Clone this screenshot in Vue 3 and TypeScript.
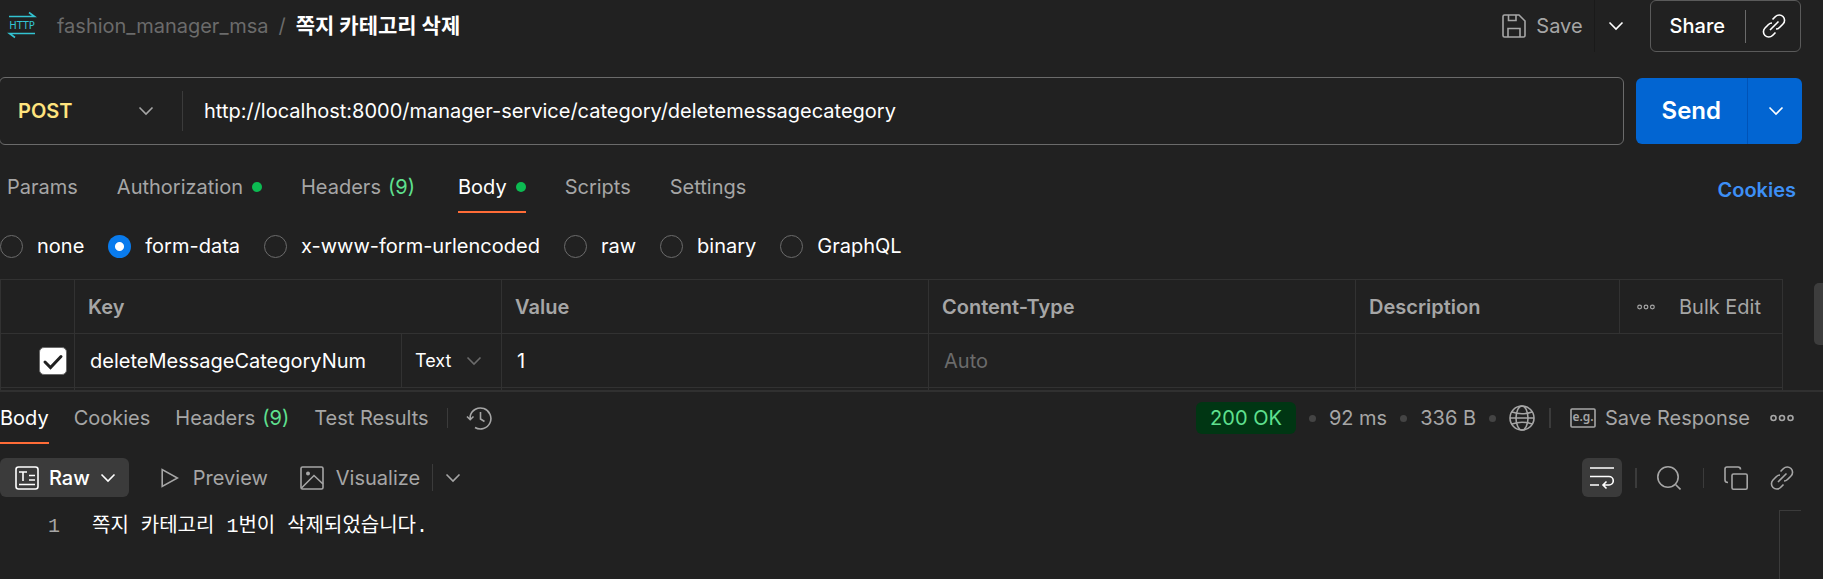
<script setup lang="ts">
import { ref } from 'vue'

interface Tab {
  label: string
  count?: number
  dot?: boolean
}

const requestTabs: Tab[] = [
  { label: 'Params' },
  { label: 'Authorization', dot: true },
  { label: 'Headers', count: 9 },
  { label: 'Body', dot: true },
  { label: 'Scripts' },
  { label: 'Settings' },
]
const responseTabs: Tab[] = [
  { label: 'Body' },
  { label: 'Cookies' },
  { label: 'Headers', count: 9 },
  { label: 'Test Results' },
]
const bodyTypes: string[] = ['none', 'form-data', 'x-www-form-urlencoded', 'raw', 'binary', 'GraphQL']

const activeRequestTab = ref('Body')
const activeResponseTab = ref('Body')
const bodyType = ref('form-data')
const method = ref('POST')
const url = ref('http://localhost:8000/manager-service/category/deletemessagecategory')
const enabled = ref(true)
const fieldKey = ref('deleteMessageCategoryNum')
const fieldType = ref('Text')
const fieldValue = ref('1')
const contentType = ref('')
const description = ref('')
const lines: string[] = ['쪽지 카테고리 1번이 삭제되었습니다.']
</script>

<template>
  <div class="app">
    <svg class="sprite" aria-hidden="true">
      <symbol id="chevron" viewBox="0 0 16 16">
        <path d="M1.5 4.5 8 11l6.500-6.500" />
      </symbol>
      <symbol id="link" viewBox="0 0 24 24">
        <path d="M8 16 16.500 7.500M10.500 5.500l3-3a5.200 5.200 0 0 1 7.500 7.500l-3.500 3.500a5 5 0 0 1-3.500 1.500M13.500 18.500l-3 3A5.200 5.200 0 0 1 3 14l3.500-3.500A5 5 0 0 1 10 9" />
      </symbol>
      <symbol id="more" viewBox="0 0 24 24">
        <circle cx="3.500" cy="12" r="2.500" />
        <circle cx="12" cy="12" r="2.500" />
        <circle cx="20.500" cy="12" r="2.500" />
      </symbol>
    </svg>

    <header class="header">
      <svg class="http" viewBox="0 0 26 26" role="img" aria-label="HTTP request">
        <path d="M0 4.500h25.500L20 0.500" />
        <text x="13" y="17" text-anchor="middle">HTTP</text>
        <path d="M26 21.500H0.500L6 25.500" />
      </svg>
      <nav class="crumbs" aria-label="Breadcrumb">
        <a href="#">fashion_manager_msa</a>
        <span class="slash">/</span>
        <strong>쪽지 카테고리 삭제</strong>
      </nav>
      <button type="button" class="save">
        <svg class="icon" viewBox="0 0 24 24">
          <path d="M1 2.500A1.500 1.500 0 0 1 2.500 1H17l6 6v14.500a1.500 1.500 0 0 1-1.500 1.500h-19A1.500 1.500 0 0 1 1 21.500zM6.500 1v5.500h7.500V1M6 23v-8.500h12V23" />
        </svg>
        Save
      </button>
      <button type="button" class="save-more" aria-label="Save options">
        <svg class="chev"><use href="#chevron" /></svg>
      </button>
      <div class="share">
        <button type="button" class="share-main">Share</button>
        <button type="button" class="share-link" aria-label="Copy link">
          <svg class="icon"><use href="#link" /></svg>
        </button>
      </div>
    </header>

    <form class="request" @submit.prevent>
      <div class="url-box">
        <label class="method">
          <select v-model="method" aria-label="Method">
            <option>POST</option>
            <option>GET</option>
          </select>
          <svg class="chev"><use href="#chevron" /></svg>
        </label>
        <input v-model="url" class="url" type="text" aria-label="Request URL" />
      </div>
      <div class="send">
        <button type="submit" class="send-main">Send</button>
        <button type="button" class="send-more" aria-label="Send options">
          <svg class="chev"><use href="#chevron" /></svg>
        </button>
      </div>
    </form>

    <div class="tabs-row">
      <div class="tabs req-tabs" role="tablist" aria-label="Request">
        <button
          v-for="tab in requestTabs"
          :key="tab.label"
          type="button"
          role="tab"
          class="tab"
          :class="{ active: tab.label === activeRequestTab }"
          :aria-selected="tab.label === activeRequestTab"
          @click="activeRequestTab = tab.label"
        >
          {{ tab.label }}
          <span v-if="tab.count" class="count">({{ tab.count }})</span>
          <span v-if="tab.dot" class="dot"></span>
        </button>
      </div>
      <a href="#" class="cookies">Cookies</a>
    </div>

    <div class="radios" role="radiogroup" aria-label="Body type">
      <label v-for="type in bodyTypes" :key="type" class="radio">
        <input v-model="bodyType" type="radio" name="body-type" :value="type" />
        {{ type }}
      </label>
    </div>

    <div class="pane">
      <table>
        <colgroup>
          <col class="col-check" />
          <col />
          <col />
          <col />
          <col />
        </colgroup>
        <thead>
          <tr>
            <th aria-label="Enabled"></th>
            <th>Key</th>
            <th>Value</th>
            <th>Content-Type</th>
            <th>
              <div class="cell">
                <span class="desc">Description</span>
                <div class="actions">
                  <button type="button" aria-label="Columns">
                    <svg class="more-small"><use href="#more" /></svg>
                  </button>
                  <button type="button">Bulk Edit</button>
                </div>
              </div>
            </th>
          </tr>
        </thead>
        <tbody>
          <tr>
            <td>
              <label class="check">
                <input v-model="enabled" type="checkbox" aria-label="Enable field" />
                <svg v-if="enabled" viewBox="0 0 28 28"><path d="M6 15l5.500 5.500L22 9.500" /></svg>
              </label>
            </td>
            <td>
              <div class="cell">
                <input v-model="fieldKey" class="field" type="text" aria-label="Key" />
                <label class="type">
                  <select v-model="fieldType" aria-label="Field type">
                    <option>Text</option>
                    <option>File</option>
                  </select>
                  <svg class="chev"><use href="#chevron" /></svg>
                </label>
              </div>
            </td>
            <td><input v-model="fieldValue" class="field" type="text" aria-label="Value" /></td>
            <td><input v-model="contentType" class="field" type="text" placeholder="Auto" aria-label="Content-Type" /></td>
            <td><input v-model="description" class="field" type="text" aria-label="Description" /></td>
          </tr>
          <tr>
            <td></td>
            <td></td>
            <td></td>
            <td></td>
            <td></td>
          </tr>
        </tbody>
      </table>
      <div class="thumb"></div>
    </div>

    <section class="response">
      <div class="res-head">
        <div class="tabs res-tabs" role="tablist" aria-label="Response">
          <button
            v-for="tab in responseTabs"
            :key="tab.label"
            type="button"
            role="tab"
            class="tab"
            :class="{ active: tab.label === activeResponseTab }"
            :aria-selected="tab.label === activeResponseTab"
            @click="activeResponseTab = tab.label"
          >
            {{ tab.label }}
            <span v-if="tab.count" class="count">({{ tab.count }})</span>
          </button>
        </div>
        <span class="bar bar-tabs"></span>
        <button type="button" aria-label="History">
          <svg class="icon-lg" viewBox="0 0 26 26">
            <path d="M4.200 14.500V11A10.500 10.500 0 1 1 9 22.500M1 11.500l3.200 3.200 3.300-3.200M14.500 7v7l4 2.500" />
          </svg>
        </button>
        <div class="status">
          <span class="ok">200 OK</span>
          <span class="sep"></span>
          <span>92 ms</span>
          <span class="sep"></span>
          <span>336 B</span>
          <span class="sep"></span>
          <button type="button" aria-label="Network">
            <svg class="icon-lg" viewBox="0 0 26 26">
              <circle cx="13" cy="13" r="12" />
              <ellipse cx="13" cy="13" rx="6" ry="12" />
              <path d="M3 7q10 3.500 20 0M3 19q10-3.500 20 0M1 13h24" />
            </svg>
          </button>
        </div>
        <span class="bar wide"></span>
        <button type="button" class="save-response">
          <svg class="icon-lg" viewBox="0 0 26 26">
            <rect x="1" y="4" width="24" height="18" rx="1" />
            <text x="13" y="16" text-anchor="middle">e.g.</text>
          </svg>
          Save Response
        </button>
        <button type="button" aria-label="More">
          <svg class="icon"><use href="#more" /></svg>
        </button>
      </div>

      <div class="toolbar">
        <button type="button" class="raw">
          <svg class="icon" viewBox="0 0 24 24">
            <rect x="1" y="1" width="22" height="22" rx="2.500" />
            <path d="M4 6h8M8 6v9M14 9.500h6M14 14h6M4 18.500h16" />
          </svg>
          Raw
          <svg class="chev"><use href="#chevron" /></svg>
        </button>
        <button type="button" class="preview">
          <svg class="play" viewBox="0 0 18 20"><path d="M1.200 1.500v17L16.500 10z" /></svg>
          Preview
        </button>
        <button type="button" class="visualize">
          <svg class="icon" viewBox="0 0 24 24">
            <rect x="1" y="1" width="22" height="22" rx="1.500" />
            <circle class="solid" cx="8" cy="7.500" r="2" />
            <path d="M1.500 22 14 9.500l9 8.500" />
          </svg>
          Visualize
        </button>
        <span class="bar tall"></span>
        <button type="button" class="view-more" aria-label="Visualize options">
          <svg class="chev"><use href="#chevron" /></svg>
        </button>
        <div class="tools">
          <button type="button" class="wrap" aria-label="Wrap lines">
            <svg class="icon" viewBox="0 0 24 24">
              <path d="M0 2h24M0 10.500h19a4.200 4.200 0 0 1 0 8.500h-6M16.500 15.500 13 19l3.500 3.500M0 19h9" />
            </svg>
          </button>
          <span class="bar wide"></span>
          <button type="button" class="search" aria-label="Search">
            <svg class="icon" viewBox="0 0 24 24">
              <circle cx="11" cy="11" r="10.200" />
              <path d="m18.500 18.500 5 5" />
            </svg>
          </button>
          <span class="bar"></span>
          <button type="button" class="copy" aria-label="Copy">
            <svg class="icon" viewBox="0 0 24 24">
              <path d="M4 16.500c-2 0-3-1-3-2.500V3a2 2 0 0 1 2-2h11c1.500 0 2.500 1 2.500 2.500" />
              <rect x="8" y="8" width="15.200" height="15.200" rx="1.500" />
            </svg>
          </button>
          <button type="button" aria-label="Copy response link">
            <svg class="icon"><use href="#link" /></svg>
          </button>
        </div>
      </div>

      <div class="editor">
        <ol class="code">
          <li v-for="(line, i) in lines" :key="i">
            <span class="num">{{ i + 1 }}</span><code>{{ line }}</code>
          </li>
        </ol>
        <div class="ruler"></div>
      </div>
    </section>
  </div>
</template>

<style>
html,
body {
  background: #212121;
}
</style>

<style scoped>
.app {
  display: flex;
  flex-direction: column;
  min-height: 100vh;
  overflow: hidden;
  background: #212121;
  color: #a6a6a6;
  font: 400 20px/28px Inter, "Noto Sans CJK KR", sans-serif;
}
.app *,
.app *::before,
.app *::after {
  box-sizing: border-box;
}
.sprite {
  position: absolute;
  width: 0;
  height: 0;
}
button,
input,
select {
  appearance: none;
  margin: 0;
  padding: 0;
  border: 0;
  border-radius: 0;
  outline: 0;
  background: none;
  color: inherit;
  font: inherit;
}
button {
  display: flex;
  align-items: center;
  flex: none;
  white-space: nowrap;
}
a {
  color: inherit;
  text-decoration: none;
}
svg {
  display: block;
  flex: none;
  fill: none;
  stroke: currentColor;
  stroke-width: 1.6;
}
.solid {
  fill: currentColor;
  stroke: none;
}
.chev {
  width: 16px;
  height: 16px;
}
.icon {
  width: 24px;
  height: 24px;
}
.icon-lg {
  width: 26px;
  height: 26px;
}
.bar {
  flex: none;
  width: 1px;
  height: 20px;
  background: #3b3b3b;
}
.bar.wide {
  width: 2px;
}

.header {
  display: flex;
  align-items: stretch;
  height: 52px;
  padding-right: 22px;
}
.http {
  width: 26px;
  height: 26px;
  margin: 12px 22px 0 9px;
  overflow: visible;
  color: #33c3d1;
}
.http text {
  fill: currentColor;
  stroke: none;
  font: 400 11px "DejaVu Sans Condensed", "Noto Sans", sans-serif;
}
.crumbs {
  display: flex;
  align-items: center;
  flex: 1;
  gap: 10px;
  color: #6b6b6b;
}
.crumbs strong {
  color: #fff;
  font-size: 21px;
  font-weight: 700;
}
.save {
  gap: 10px;
  padding-right: 11px;
}
.save-more {
  padding: 0 26px 0 13px;
  border-left: 1px solid #1a1a1a;
  color: #fff;
}
.share {
  display: flex;
  align-items: center;
  border: 1px solid #5a5a5a;
  border-radius: 6px;
  color: #fff;
}
.share-main {
  height: 33px;
  padding: 0 20px 0 19px;
  border-right: 1px solid #6b6b6b;
  font-weight: 500;
}
.share-link {
  padding: 0 14px 0 16px;
}

.request {
  display: flex;
  align-items: center;
  gap: 12px;
  margin: 25px 21px 0 -1px;
}
.url-box {
  display: flex;
  align-items: center;
  flex: 1;
  height: 68px;
  border: 1px solid #6b6b6b;
  border-radius: 6px;
}
.method {
  display: flex;
  align-items: center;
  justify-content: space-between;
  width: 183px;
  height: 40px;
  padding: 0 28px 0 18px;
  border-right: 1px solid #3b3b3b;
}
.method select {
  color: #ffe47e;
  font-weight: 600;
}
.url {
  flex: 1;
  min-width: 0;
  padding: 0 21px;
  color: #fff;
}
.send {
  display: flex;
  height: 66px;
  border-radius: 6px;
  overflow: hidden;
  background: #0265d2;
  color: #fff;
}
.send-main {
  padding: 0 26px;
  border-right: 1px solid #0053b8;
  font-size: 24px;
  font-weight: 600;
}
.send-more {
  padding: 0 18px 0 20px;
}

.tabs-row {
  display: flex;
  align-items: center;
  justify-content: space-between;
  height: 52px;
  margin-top: 16px;
  padding: 0 27px 0 7px;
}
.tabs {
  display: flex;
}
.tab {
  height: 52px;
  gap: 7px;
  border: solid transparent;
  border-width: 2px 0;
}
.tab.active {
  border-bottom-color: #ff6c37;
  color: #fff;
}
.count {
  color: #5fe08f;
}
.req-tabs {
  gap: 39px;
}
.req-tabs .count {
  margin-right: 4px;
}
.dot {
  width: 10px;
  height: 10px;
  margin-left: 2px;
  border-radius: 50%;
  background: #0cbb52;
}
.cookies {
  padding-top: 6px;
  color: #3d8ff5;
  font-weight: 600;
}

.radios {
  display: flex;
  align-items: center;
  gap: 24px;
  height: 66px;
  color: #fff;
}
.radio {
  display: flex;
  align-items: center;
  gap: 14px;
}
.radio input {
  width: 23px;
  height: 23px;
  border: 1px solid #6b6b6b;
  border-radius: 50%;
}
.radio input:checked {
  border: 0;
  background: radial-gradient(circle, #fff 4px, #097bed 5px);
}

.pane {
  display: flex;
  align-items: flex-start;
  justify-content: space-between;
  gap: 31px;
  max-height: 111px;
  overflow: hidden;
}
table {
  flex: 1;
  width: 100%;
  table-layout: fixed;
  border-collapse: collapse;
}
.col-check {
  width: 74px;
}
th,
td {
  height: 54px;
  padding: 0 0 0 13px;
  border: 1px solid #323232;
  text-align: left;
}
th {
  font-weight: 600;
}
td {
  padding-left: 15px;
  color: #fff;
}
.cell {
  display: flex;
  align-items: center;
  height: 53px;
}
.desc {
  flex: 1;
}
.actions {
  display: flex;
  align-items: center;
  gap: 24px;
  height: 100%;
  padding: 0 21px 0 17px;
  border-left: 1px solid #323232;
}
.actions button {
  font-weight: 400;
}
.more-small {
  width: 18px;
  height: 18px;
}
.check {
  display: grid;
  width: 28px;
  height: 28px;
  margin-left: 23px;
}
.check input,
.check svg {
  grid-area: 1 / 1;
  width: 28px;
  height: 28px;
  border-radius: 5px;
}
.check input {
  border: 1px solid #6b6b6b;
}
.check input:checked {
  background: #fff;
}
.check svg {
  color: #212121;
  stroke-width: 3;
  stroke-linecap: round;
}
.field {
  flex: 1;
  width: 100%;
  min-width: 0;
}
.field::placeholder {
  color: #6b6b6b;
  opacity: 1;
}
.type {
  display: flex;
  align-items: center;
  justify-content: space-between;
  width: 100px;
  height: 100%;
  padding: 0 19px 0 13px;
  border-left: 1px solid #323232;
  font-size: 18px;
}
.type .chev {
  color: #6b6b6b;
}
.thumb {
  flex: none;
  width: 9px;
  height: 62px;
  margin-top: 4px;
  border-radius: 5px 0 0 5px;
  background: #3d3d3d;
}

.response {
  display: flex;
  flex-direction: column;
  flex: 1;
  border-top: 2px solid #303030;
}
.res-head {
  display: flex;
  align-items: center;
  height: 52px;
  padding-right: 29px;
}
.res-tabs {
  gap: 25px;
}
.bar-tabs {
  margin: 0 18px;
}
.status {
  display: flex;
  align-items: center;
  gap: 13px;
  margin: 0 14px 0 auto;
}
.ok {
  padding: 2px 14px;
  border-radius: 6px;
  background: #003613;
  color: #5fe08f;
}
.sep {
  width: 7px;
  height: 7px;
  border-radius: 50%;
  background: #444;
}
.save-response {
  gap: 9px;
  margin: 0 20px 0 19px;
}
.save-response text {
  fill: currentColor;
  stroke: none;
  font: 600 12px "Noto Sans", sans-serif;
}

.toolbar {
  display: flex;
  align-items: center;
  height: 39px;
  margin-top: 14px;
  padding-right: 29px;
}
.raw {
  gap: 10px;
  height: 100%;
  padding: 0 13px 0 15px;
  border-radius: 6px;
  background: #3b3b3b;
  color: #fff;
  font-weight: 500;
}
.play {
  width: 18px;
  height: 20px;
}
.preview {
  gap: 14px;
  margin-left: 32px;
}
.visualize {
  gap: 12px;
  margin: 0 12px 0 32px;
}
.bar.tall {
  height: 27px;
}
.view-more {
  margin-left: 12px;
}
.tools {
  display: flex;
  align-items: center;
  gap: 20px;
  height: 100%;
  margin-left: auto;
}
.wrap {
  height: 100%;
  margin-right: -7px;
  padding: 0 8px;
  border-radius: 6px;
  background: #3b3b3b;
  color: #fff;
}
.search,
.copy {
  margin-right: 2px;
}

.editor {
  display: flex;
  flex: 1;
  margin-top: 13px;
  padding-right: 22px;
}
.code {
  flex: 1;
  margin: 0;
  padding: 2px 0 0;
  list-style: none;
  line-height: 30px;
}
.code li {
  display: flex;
}
.num,
code {
  font-family: "Liberation Mono", "Noto Sans CJK KR", monospace;
}
.num {
  width: 60px;
  margin-right: 32px;
  text-align: right;
}
code {
  color: #fff;
}
.ruler {
  width: 22px;
  border: solid #3b3b3b;
  border-width: 1px 0 0 1px;
}
</style>
